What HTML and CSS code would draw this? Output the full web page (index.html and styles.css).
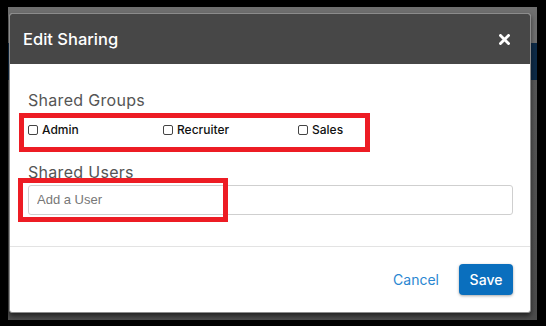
FILE: index.html
```html
<!DOCTYPE html>
<html lang="en">

<head>
    <meta charset="UTF-8">
    <meta name="viewport" content="width=device-width, initial-scale=1.0">
    <title>Edit Sharing</title>
    <link rel="stylesheet" href="styles.css">
</head>

<body>
    <div class="backdrop">
        <div class="modal">
            <!-- Cabecera -->
            <div class="modal-header">
                <h2 class="modal-title">Edit Sharing</h2>
                <button class="close-btn" aria-label="Close">
                    <svg width="11" height="11" viewBox="0 0 11 11">
                        <path d="M1.5 1.5 L9.5 9.5 M9.5 1.5 L1.5 9.5" stroke="#fff" stroke-width="2.8" stroke-linecap="square" />
                    </svg>
                </button>
            </div>

            <!-- Cuerpo -->
            <div class="modal-body">
                <h3 class="section-label">Shared Groups</h3>
                <div class="group-row">
                    <label class="check"><input type="checkbox"> Admin</label>
                    <label class="check"><input type="checkbox"> Recruiter</label>
                    <label class="check"><input type="checkbox"> Sales</label>
                    <span class="highlight highlight-groups"></span>
                </div>

                <h3 class="section-label users-label">Shared Users</h3>
                <div class="user-field">
                    <input type="text" class="input-field" placeholder="Add a User">
                    <span class="highlight highlight-user"></span>
                </div>
            </div>

            <!-- Pie -->
            <div class="modal-footer">
                <a class="cancel-link" href="#">Cancel</a>
                <button class="save-btn">Save</button>
            </div>
        </div>
    </div>
</body>

</html>
```

FILE: styles.css
```css
/* Estilos generales */
body {
    margin: 0;
    background-color: #000;
    font-family: Inter, "Open Sans", sans-serif;
}

.backdrop {
    margin: 7px 9px 6px 8px;
    height: 313px;
    box-sizing: border-box;
    padding: 6px 6px 7px 1px;
    background: linear-gradient(to bottom, #6f6f6f 0, #6f6f6f 36px, #0d2a47 36px, #0d2a47 73px, #575757 73px, #4c4c4c 100%);
}

/* Ventana modal */
.modal {
    height: 100%;
    box-sizing: border-box;
    display: flex;
    flex-direction: column;
    background-color: #fff;
    border: 1px solid #8c8c8c;
    border-radius: 3px;
    box-shadow: 0 3px 5px rgba(0, 0, 0, 0.55);
    overflow: hidden;
}

.modal-header {
    height: 50px;
    flex-shrink: 0;
    display: flex;
    align-items: center;
    justify-content: space-between;
    padding: 0 20px 0 13px;
    background-color: #474747;
}

.modal-title {
    margin: 0;
    color: #fff;
    font-size: 16.5px;
    font-weight: 500;
}

.close-btn {
    display: flex;
    padding: 0;
    border: none;
    background: none;
    cursor: pointer;
}

.modal-body {
    flex: 1;
    padding: 24px 17px 0 18px;
}

.section-label {
    margin: 0;
    font-size: 16px;
    line-height: 24px;
    font-weight: 400;
    letter-spacing: 0.3px;
    color: #555;
}

.users-label {
    margin-top: 21px;
}

/* Grupos */
.group-row {
    position: relative;
    display: grid;
    grid-template-columns: 135px 135px 135px;
    margin-top: 9px;
}

.check {
    display: flex;
    align-items: center;
    gap: 4px;
    font-size: 12px;
    line-height: 18px;
    font-weight: 500;
    color: #111;
}

.check input {
    appearance: none;
    width: 10px;
    height: 10px;
    margin: 0;
    border: 1px solid #444;
    border-radius: 2px;
    background-color: #fff;
}

.user-field {
    position: relative;
    margin-top: 1px;
}

.input-field {
    display: block;
    width: 100%;
    height: 30px;
    box-sizing: border-box;
    padding: 0 8px 2px;
    border: 1px solid #cfcfcf;
    border-radius: 3px;
    font-family: "Liberation Sans", Arial, sans-serif;
    font-size: 13px;
}

.input-field::placeholder {
    color: #777;
}

/* Marcas rojas */
.highlight {
    position: absolute;
    border: 5px solid #ed1c24;
    pointer-events: none;
}

.highlight-groups {
    left: -9px;
    top: -8px;
    width: 341px;
    height: 29px;
}

.highlight-user {
    left: -10px;
    top: -7px;
    width: 200px;
    height: 34px;
}

/* Pie */
.modal-footer {
    height: 65px;
    flex-shrink: 0;
    display: flex;
    align-items: center;
    justify-content: flex-end;
    gap: 20px;
    padding-right: 17px;
    border-top: 1px solid #e3e3e3;
}

.cancel-link {
    color: #2a86d1;
    text-decoration: none;
    font-size: 14px;
}

.save-btn {
    width: 54px;
    height: 31px;
    border: none;
    border-radius: 4px;
    background-color: #0a6fbe;
    color: #fff;
    font-family: inherit;
    font-size: 14px;
    font-weight: 500;
    box-shadow: 0 1px 3px rgba(0, 0, 0, 0.35);
    cursor: pointer;
}
```
